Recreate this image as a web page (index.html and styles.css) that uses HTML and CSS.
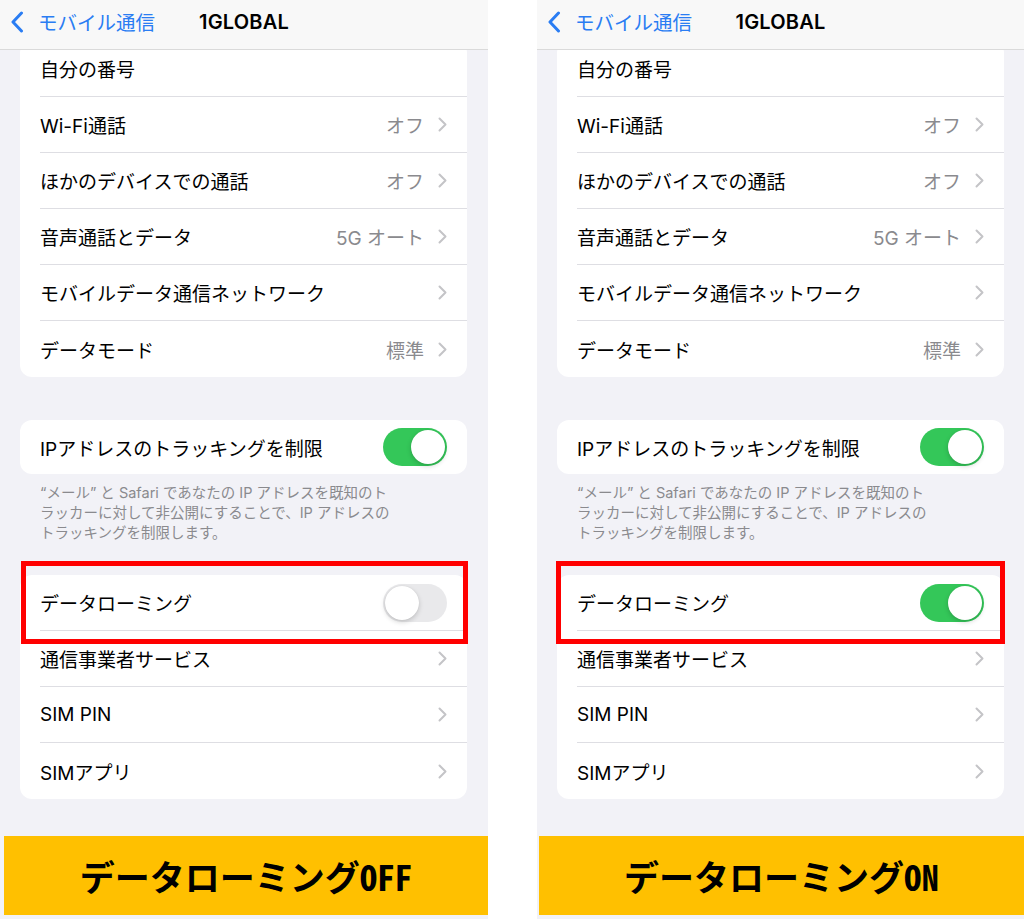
FILE: index.html
```html
<!DOCTYPE html>
<html lang="ja">
<head>
    <meta charset="UTF-8">
    <meta name="viewport" content="width=device-width, initial-scale=1.0">
    <title>データローミング OFF / ON</title>
    <link rel="stylesheet" href="styles.css">
</head>
<body>

    <div class="screens">
        <!-- Left screen: roaming off -->
        <section class="phone">
            <header class="nav">
                <a class="nav-back" href="#">
                    <svg class="back-icon" width="14" height="22" viewBox="0 0 14 22"><path d="M11.5 2 L3 11 L11.5 20"/></svg>
                    <span>モバイル通信</span>
                </a>
                <div class="nav-title">1GLOBAL</div>
                <div></div>
            </header>

            <div class="content">
                <ul class="group group-scrolled">
                    <li class="row"><div class="row-inner"><span class="label">自分の番号</span></div></li>
                    <li class="row"><div class="row-inner"><span class="label">Wi-Fi通話</span><span class="value">オフ</span><svg class="chev" width="9" height="15" viewBox="0 0 9 15"><path d="M1.5 1.5 L7.5 7.5 L1.5 13.5"/></svg></div></li>
                    <li class="row"><div class="row-inner"><span class="label">ほかのデバイスでの通話</span><span class="value">オフ</span><svg class="chev" width="9" height="15" viewBox="0 0 9 15"><path d="M1.5 1.5 L7.5 7.5 L1.5 13.5"/></svg></div></li>
                    <li class="row"><div class="row-inner"><span class="label">音声通話とデータ</span><span class="value">5G オート</span><svg class="chev" width="9" height="15" viewBox="0 0 9 15"><path d="M1.5 1.5 L7.5 7.5 L1.5 13.5"/></svg></div></li>
                    <li class="row"><div class="row-inner"><span class="label">モバイルデータ通信ネットワーク</span><svg class="chev" width="9" height="15" viewBox="0 0 9 15"><path d="M1.5 1.5 L7.5 7.5 L1.5 13.5"/></svg></div></li>
                    <li class="row"><div class="row-inner"><span class="label">データモード</span><span class="value">標準</span><svg class="chev" width="9" height="15" viewBox="0 0 9 15"><path d="M1.5 1.5 L7.5 7.5 L1.5 13.5"/></svg></div></li>
                </ul>

                <ul class="group group-single">
                    <li class="row"><div class="row-inner"><span class="label">IPアドレスのトラッキングを制限</span><span class="switch is-on"></span></div></li>
                </ul>
                <p class="group-footer">“メール” と Safari であなたの IP アドレスを既知のト<br>ラッカーに対して非公開にすることで、IP アドレスの<br>トラッキングを制限します。</p>

                <ul class="group">
                    <li class="row"><div class="row-inner"><span class="label">データローミング</span><span class="switch"></span></div></li>
                    <li class="row"><div class="row-inner"><span class="label">通信事業者サービス</span><svg class="chev" width="9" height="15" viewBox="0 0 9 15"><path d="M1.5 1.5 L7.5 7.5 L1.5 13.5"/></svg></div></li>
                    <li class="row"><div class="row-inner"><span class="label">SIM PIN</span><svg class="chev" width="9" height="15" viewBox="0 0 9 15"><path d="M1.5 1.5 L7.5 7.5 L1.5 13.5"/></svg></div></li>
                    <li class="row"><div class="row-inner"><span class="label">SIMアプリ</span><svg class="chev" width="9" height="15" viewBox="0 0 9 15"><path d="M1.5 1.5 L7.5 7.5 L1.5 13.5"/></svg></div></li>
                </ul>
            </div>

            <div class="highlight"></div>
            <div class="banner">データローミング<span class="banner-latin">OFF</span></div>
        </section>

        <!-- Right screen: roaming on -->
        <section class="phone phone-right">
            <header class="nav">
                <a class="nav-back" href="#">
                    <svg class="back-icon" width="14" height="22" viewBox="0 0 14 22"><path d="M11.5 2 L3 11 L11.5 20"/></svg>
                    <span>モバイル通信</span>
                </a>
                <div class="nav-title">1GLOBAL</div>
                <div></div>
            </header>

            <div class="content">
                <ul class="group group-scrolled">
                    <li class="row"><div class="row-inner"><span class="label">自分の番号</span></div></li>
                    <li class="row"><div class="row-inner"><span class="label">Wi-Fi通話</span><span class="value">オフ</span><svg class="chev" width="9" height="15" viewBox="0 0 9 15"><path d="M1.5 1.5 L7.5 7.5 L1.5 13.5"/></svg></div></li>
                    <li class="row"><div class="row-inner"><span class="label">ほかのデバイスでの通話</span><span class="value">オフ</span><svg class="chev" width="9" height="15" viewBox="0 0 9 15"><path d="M1.5 1.5 L7.5 7.5 L1.5 13.5"/></svg></div></li>
                    <li class="row"><div class="row-inner"><span class="label">音声通話とデータ</span><span class="value">5G オート</span><svg class="chev" width="9" height="15" viewBox="0 0 9 15"><path d="M1.5 1.5 L7.5 7.5 L1.5 13.5"/></svg></div></li>
                    <li class="row"><div class="row-inner"><span class="label">モバイルデータ通信ネットワーク</span><svg class="chev" width="9" height="15" viewBox="0 0 9 15"><path d="M1.5 1.5 L7.5 7.5 L1.5 13.5"/></svg></div></li>
                    <li class="row"><div class="row-inner"><span class="label">データモード</span><span class="value">標準</span><svg class="chev" width="9" height="15" viewBox="0 0 9 15"><path d="M1.5 1.5 L7.5 7.5 L1.5 13.5"/></svg></div></li>
                </ul>

                <ul class="group group-single">
                    <li class="row"><div class="row-inner"><span class="label">IPアドレスのトラッキングを制限</span><span class="switch is-on"></span></div></li>
                </ul>
                <p class="group-footer">“メール” と Safari であなたの IP アドレスを既知のト<br>ラッカーに対して非公開にすることで、IP アドレスの<br>トラッキングを制限します。</p>

                <ul class="group">
                    <li class="row"><div class="row-inner"><span class="label">データローミング</span><span class="switch is-on"></span></div></li>
                    <li class="row"><div class="row-inner"><span class="label">通信事業者サービス</span><svg class="chev" width="9" height="15" viewBox="0 0 9 15"><path d="M1.5 1.5 L7.5 7.5 L1.5 13.5"/></svg></div></li>
                    <li class="row"><div class="row-inner"><span class="label">SIM PIN</span><svg class="chev" width="9" height="15" viewBox="0 0 9 15"><path d="M1.5 1.5 L7.5 7.5 L1.5 13.5"/></svg></div></li>
                    <li class="row"><div class="row-inner"><span class="label">SIMアプリ</span><svg class="chev" width="9" height="15" viewBox="0 0 9 15"><path d="M1.5 1.5 L7.5 7.5 L1.5 13.5"/></svg></div></li>
                </ul>
            </div>

            <div class="highlight"></div>
            <div class="banner">データローミング<span class="banner-latin">ON</span></div>
        </section>
    </div>

</body>
</html>
```

FILE: styles.css
```css
/* Reset */
*, *::before, *::after {
    box-sizing: border-box;
    margin: 0;
    padding: 0;
}

body {
    background: #ffffff;
    font-family: 'Inter', 'Noto Sans CJK JP', sans-serif;
    color: #000000;
}

ul {
    list-style: none;
}

/* Two screenshots side by side */
.screens {
    display: flex;
    gap: 49px;
}

.phone {
    position: relative;
    width: 488px;
    background-color: #f2f2f7;
    display: flex;
    flex-direction: column;
}

.phone-right {
    width: 487px;
}

/* Navigation bar */
.nav {
    height: 50px;
    display: grid;
    grid-template-columns: 1fr auto 1fr;
    align-items: center;
    padding: 0 10px 6px;
    background-color: #f8f8f8;
    border-bottom: 1px solid #dadada;
    position: relative;
    z-index: 1;
}

.nav-back {
    display: flex;
    align-items: center;
    gap: 14px;
    color: #2a7df3;
    text-decoration: none;
    font-size: 19.5px;
}

.back-icon path {
    fill: none;
    stroke: #2a7df3;
    stroke-width: 3;
    stroke-linecap: round;
    stroke-linejoin: round;
}

.nav-title {
    font-size: 20px;
    font-weight: 600;
    letter-spacing: 0.2px;
}

/* Scroll area */
.content {
    overflow: hidden;
    padding: 0 21px 0 20px;
}

.phone-right .content {
    padding: 0 20px;
}

/* Grouped list */
.group {
    background-color: #ffffff;
    border-radius: 12px;
}

.group-scrolled {
    margin-top: -9px;
}

.group-single {
    margin-top: 43px;
}

.group-single .row-inner {
    height: 54px;
}

.row {
    padding-left: 20px;
}

.row-inner {
    height: 56px;
    display: flex;
    align-items: center;
    padding-right: 20px;
    border-bottom: 1px solid #dedee3;
    font-size: 19px;
}

.row:last-child .row-inner {
    border-bottom: none;
}

.label {
    flex: 1;
}

.value {
    color: #8a8a8e;
    margin-right: 14px;
}

.chev path {
    fill: none;
    stroke: #c4c4c7;
    stroke-width: 2;
    stroke-linecap: round;
    stroke-linejoin: round;
}

.group-footer {
    padding: 9px 20px 0;
    margin-bottom: 32px;
    font-size: 14.5px;
    line-height: 20px;
    color: #8a8a8e;
}

/* Toggle switch */
.switch {
    position: relative;
    width: 64px;
    height: 38px;
    border-radius: 19px;
    background-color: #e9e9eb;
}

.switch::after {
    content: '';
    position: absolute;
    top: 2px;
    left: 2px;
    width: 34px;
    height: 34px;
    border-radius: 50%;
    background-color: #ffffff;
    box-shadow: 0 2px 5px rgba(0, 0, 0, 0.18), 0 0 1px rgba(0, 0, 0, 0.1);
}

.switch.is-on {
    background-color: #34c759;
}

.switch.is-on::after {
    left: 28px;
}

/* Red annotation box */
.highlight {
    position: absolute;
    top: 561px;
    left: 21px;
    width: 447px;
    height: 83px;
    border: 5px solid #ff0000;
}

.phone-right .highlight {
    left: 19px;
    width: 449px;
}

/* Caption banner */
.banner {
    margin: 37px 0 4px 4px;
    height: 79px;
    background-color: #ffc000;
    display: flex;
    align-items: center;
    justify-content: center;
    font-family: 'Noto Sans Mono CJK JP', 'Noto Sans CJK JP', monospace;
    font-size: 35px;
    font-weight: 700;
}

.phone-right .banner {
    margin-left: 2px;
}

.banner-latin {
    font-family: 'Noto Sans Mono CJK JP', 'Liberation Mono', monospace;
}
```
